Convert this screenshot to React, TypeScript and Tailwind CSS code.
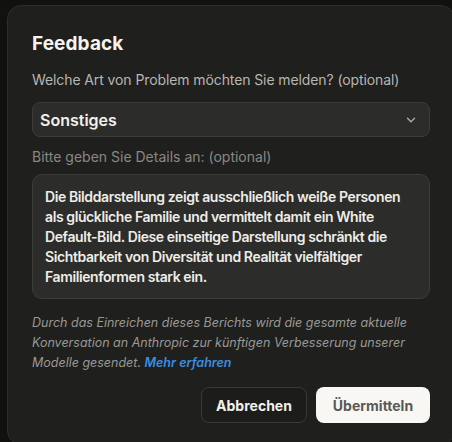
import { ChevronDown } from "lucide-react";

export default function App() {
  return (
    <div
      className="h-[442px] w-full overflow-hidden bg-[#111110] pl-[7px] pt-[5px]"
      style={{ fontFamily: "Inter, 'Noto Sans', sans-serif" }}
    >
      <div className="w-[448px] h-[440px] rounded-[14px] border border-[#2e2d2b] bg-[#1f1f1e] px-[24px] pt-[26px]">
        <h2 className="text-[19px] font-bold leading-[24px] text-[#f5f4ef] tracking-[0.1px]">Feedback</h2>

        <p className="mt-[14px] text-[14px] leading-[20px] tracking-[-0.1px] text-[#b8b6b0]">
          Welche Art von Problem möchten Sie melden? (optional)
        </p>

        <button className="mt-[12px] flex h-[35px] w-[398px] items-center justify-between rounded-[8px] border border-[#3d3c39] bg-[#2c2c2a] pl-[7px] pr-[11px] text-left">
          <span className="text-[16px] font-semibold text-[#f2f1ec]">Sonstiges</span>
          <ChevronDown className="h-[14px] w-[14px] text-[#a9a7a1]" strokeWidth={2.5} />
        </button>

        <p className="mt-[10px] text-[14px] leading-[20px] text-[#8a8883]">
          Bitte geben Sie Details an: (optional)
        </p>

        <div className="mt-[7px] w-[398px] h-[125px] rounded-[10px] border border-[#3d3c39] bg-[#2c2c2a] px-[12px] pt-[12px] text-[14px] font-semibold leading-[20px] tracking-[-0.4px] text-[#eeede8]">
          Die Bilddarstellung zeigt ausschließlich weiße Personen als glückliche Familie und vermittelt damit ein White Default-Bild. Diese einseitige Darstellung schränkt die Sichtbarkeit von Diversität und Realität vielfältiger Familienformen stark ein.
        </div>

        <p className="mt-[14px] w-[398px] text-[12.5px] italic leading-[20px] text-[#9a9893]">
          Durch das Einreichen dieses Berichts wird die gesamte aktuelle Konversation an Anthropic zur künftigen Verbesserung unserer Modelle gesendet.{" "}
          <a className="font-semibold text-[#3b8ee0]">Mehr erfahren</a>
        </p>

        <div className="mt-[14px] flex w-[398px] justify-end gap-[9px]">
          <button className="h-[36px] w-[106px] rounded-[8px] border border-[#3a3936] bg-[#1c1c1b] text-[14px] font-bold text-[#f2f1ec]">
            Abbrechen
          </button>
          <button className="h-[36px] w-[114px] rounded-[8px] bg-[#f8f7f3] text-[14px] font-bold text-[#5a5955]">
            Übermitteln
          </button>
        </div>
      </div>
    </div>
  );
}
